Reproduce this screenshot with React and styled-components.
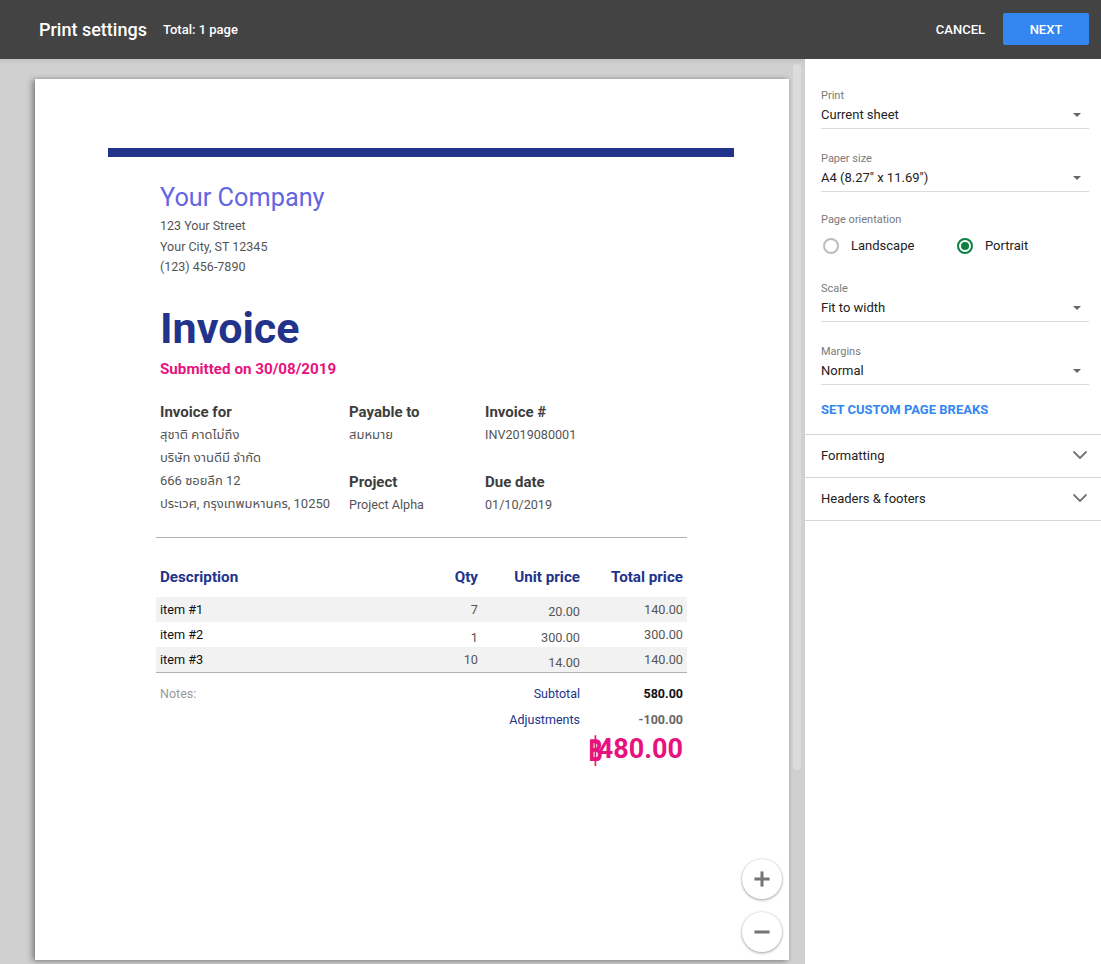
import React from 'react';
import styled, { createGlobalStyle } from 'styled-components';
import { Plus, Minus, ChevronDown } from 'lucide-react';

const Global = createGlobalStyle`
  html, body { margin: 0; padding: 0; height: 100%; overflow: hidden; }
  body { font-family: Roboto, "Noto Sans", "Noto Sans Thai", "Liberation Sans", sans-serif; }
  * { box-sizing: border-box; }
`;

const Shell = styled.div`
  width: 1101px; height: 964px; display: flex; flex-direction: column; overflow: hidden;
`;
const Header = styled.header`
  height: 59px; flex: none; background: #434343; color: #fff;
  display: flex; align-items: center; padding: 0 12px 0 39px;
`;
const Title = styled.h1`
  margin: 0; font-size: 18px; font-weight: 500; color: #fff;
`;
const Total = styled.span`
  margin-left: 16px; font-size: 13px; font-weight: 500;
`;
const Spacer = styled.div` flex: 1; `;
const CancelButton = styled.button`
  background: none; border: 0; color: #fff; font: 500 13px Roboto, sans-serif;
  padding: 0; margin-right: 18px;
`;
const NextButton = styled.button`
  width: 86px; height: 32px; border: 0; border-radius: 2px; background: #3486f0; color: #fff;
  font: 500 13px Roboto, sans-serif; margin-bottom: 1px;
`;
const Body = styled.div` flex: 1; display: flex; min-height: 0; `;
const Preview = styled.main`
  position: relative; width: 805px; flex: none; background: #d0d0d0;
  padding: 20px 0 0 35px; overflow: hidden;
  box-shadow: inset 0 6px 6px -6px rgba(0,0,0,.12);
`;
const Scrollbar = styled.div`
  position: absolute; left: 793px; top: 5px; width: 8px; height: 706px;
  background: #dcdcdc; border-radius: 4px;
`;
const Sheet = styled.article`
  width: 754px; height: 881px; background: #fff; padding: 69px 55px 0 73px;
  box-shadow: -3px 1px 6px rgba(0,0,0,.35), 0 0 3px rgba(0,0,0,.15);
`;
const TopBar = styled.div` height: 9px; background: #22338c; `;
const Content = styled.div` margin: 0 47px 0 48px; width: 531px; `;
const Inset = styled.div` padding-left: 4px; `;
const Company = styled.h2`
  margin: 26px 0 0; font-size: 25.3px; font-weight: 400; line-height: 30px; color: #6366e0;
`;
const Address = styled.div`
  margin-top: 3px; font-size: 12.5px; line-height: 20.5px; color: #555;
`;
const InvoiceTitle = styled.h2`
  margin: 25px 0 0; font-size: 43px; line-height: 50px; font-weight: 700; color: #22338c;
`;
const Submitted = styled.div`
  margin-top: 6px; font-size: 15.2px; line-height: 20px; font-weight: 700; color: #e8127f;
`;
const Details = styled.div`
  margin-top: 23px; display: grid; grid-template-columns: 189px 136px 1fr;
`;
const Column = styled.div` display: flex; flex-direction: column; `;
const DetailHead = styled.div`
  font-size: 15px; font-weight: 700; line-height: 20px; color: #3d3d3d;
  margin-top: ${p => p.$gap || 0}px; margin-bottom: 1px;
`;
const DetailLine = styled.div`
  font-size: ${p => (p.$thai ? 13 : 12.6)}px; line-height: 23.3px; height: 23.3px; color: #555; white-space: nowrap;
`;
const Rule = styled.div` height: 1px; margin-top: 21px; background: #b0b0b0; `;
const TableHead = styled.div`
  display: grid; grid-template-columns: 1fr 60px 102px 103px; margin-top: 29px; padding: 0 4px;
  font-size: 15.2px; font-weight: 700; line-height: 20px; color: #22338c; height: 30px;
`;
const Right = styled.div` text-align: right; `;
const Row = styled.div`
  display: grid; grid-template-columns: 1fr 60px 102px 103px; height: 25px; padding: 0 4px;
  font-size: 12.7px; line-height: 25px; color: #555;
  background: ${p => (p.$shaded ? '#f2f2f2' : '#fff')};
`;
const ItemName = styled.div` color: #111; `;
const Nudge = styled(Right)` padding-top: ${p => p.$top || 0}px; `;
const TableEnd = styled.div` height: 1px; background: #b0b0b0; `;
const Summary = styled.div`
  display: grid; grid-template-columns: 1fr 102px 103px; padding: 0 4px; height: 26px;
  font-size: 12.5px; line-height: 26px; margin-top: ${p => p.$top || 0}px;
`;
const Notes = styled.div` color: #9a9a9a; `;
const SumLabel = styled(Right)` color: #22338c; `;
const SumValue = styled(Right)` font-weight: 700; color: ${p => p.$color}; `;
const GrandTotal = styled.div`
  margin-top: -2px; padding-right: 4px; text-align: right; font-size: 27px; line-height: 34px; font-weight: 700; color: #e8127f;
`;
const Baht = styled.span`
  font-family: "Noto Sans", "DejaVu Sans", sans-serif; display: inline-block; transform: scaleY(1.25) scaleX(.75);
  transform-origin: right center; margin-right: -5px;
`;
const Fab = styled.button`
  position: absolute; left: 742px; top: ${p => p.$top}px; width: 40px; height: 40px; border-radius: 50%;
  border: 0; padding: 0; background: #fff; color: #757575; display: flex; align-items: center; justify-content: center;
  box-shadow: 0 1px 3px rgba(0,0,0,.35), 0 0 2px rgba(0,0,0,.12);
`;
const Panel = styled.aside`
  flex: 1; background: #fff; display: flex; flex-direction: column;
`;
const Settings = styled.div` padding: 30px 12px 0 16px; `;
const Field = styled.div` height: ${p => p.$h || 63}px; `;
const FieldLabel = styled.div` font-size: 11px; line-height: 14px; color: #7a7a7a; `;
const Select = styled.div`
  margin-top: 2px; height: 24px; display: flex; align-items: center; justify-content: space-between;
  font-size: 13px; color: #222; border-bottom: 1px solid #dcdcdc; padding: 0 8px 4px 0; line-height: 18px;
`;
const Caret = styled.span`
  width: 0; height: 0; border-left: 4.5px solid transparent; border-right: 4.5px solid transparent;
  border-top: 4px solid #666;
`;
const Orientation = styled.div` height: 69px; `;
const RadioRow = styled.div`
  display: flex; margin-top: 10px; font-size: 13px; color: #222; line-height: 18px;
`;
const RadioItem = styled.label`
  display: flex; align-items: center; width: 134px; padding-left: 2px;
`;
const Radio = styled.span`
  width: 16px; height: 16px; border-radius: 50%; flex: none; margin-right: 12px;
  border: 2px solid ${p => (p.$on ? '#0b8043' : '#bdbdbd')};
  display: flex; align-items: center; justify-content: center;
  &::after { content: ''; width: 8px; height: 8px; border-radius: 50%; background: ${p => (p.$on ? '#0b8043' : 'transparent')}; }
`;
const LinkText = styled.div`
  margin-top: -7px; font-size: 13px; font-weight: 700; line-height: 18px; color: #3486f0; height: 33px;
`;
const Accordion = styled.div`
  height: 43px; border-top: 1px solid #d6d6d6; padding: 0 9px 2px 16px;
  display: flex; align-items: center; justify-content: space-between;
  font-size: 13px; color: #222;
  ${p => p.$last && 'height: 44px; border-bottom: 1px solid #d6d6d6;'}
`;

const rows = [
  ['item #1', '7', 0, '20.00', 2, '140.00', true],
  ['item #2', '1', 3, '300.00', 3, '300.00', false],
  ['item #3', '10', 0, '14.00', 3, '140.00', true],
];

function SelectField({ label, value, height }) {
  return (
    <Field $h={height}>
      <FieldLabel>{label}</FieldLabel>
      <Select>{value}<Caret /></Select>
    </Field>
  );
}

export default function App() {
  return (
    <Shell>
      <Global />
      <Header>
        <Title>Print settings</Title>
        <Total>Total: 1 page</Total>
        <Spacer />
        <CancelButton>CANCEL</CancelButton>
        <NextButton>NEXT</NextButton>
      </Header>
      <Body>
        <Preview>
          <Scrollbar />
          <Sheet>
            <TopBar />
            <Content>
              <Inset>
                <Company>Your Company</Company>
                <Address>123 Your Street<br />Your City, ST 12345<br />(123) 456-7890</Address>
                <InvoiceTitle>Invoice</InvoiceTitle>
                <Submitted>Submitted on 30/08/2019</Submitted>
                <Details>
                  <Column>
                    <DetailHead>Invoice for</DetailHead>
                    <DetailLine $thai>สุชาติ คาดไม่ถึง</DetailLine>
                    <DetailLine $thai>บริษัท งานดีมี จำกัด</DetailLine>
                    <DetailLine $thai>666 ซอยลึก 12</DetailLine>
                    <DetailLine $thai>ประเวศ, กรุงเทพมหานคร, 10250</DetailLine>
                  </Column>
                  <Column>
                    <DetailHead>Payable to</DetailHead>
                    <DetailLine $thai>สมหมาย</DetailLine>
                    <DetailHead $gap={26}>Project</DetailHead>
                    <DetailLine>Project Alpha</DetailLine>
                  </Column>
                  <Column>
                    <DetailHead>Invoice #</DetailHead>
                    <DetailLine>INV2019080001</DetailLine>
                    <DetailHead $gap={26}>Due date</DetailHead>
                    <DetailLine>01/10/2019</DetailLine>
                  </Column>
                </Details>
              </Inset>
              <Rule />
              <TableHead>
                <div>Description</div>
                <Right>Qty</Right>
                <Right>Unit price</Right>
                <Right>Total price</Right>
              </TableHead>
              {rows.map(r => (
                <Row key={r[0]} $shaded={r[6]}>
                  <ItemName>{r[0]}</ItemName>
                  <Nudge $top={r[2]}>{r[1]}</Nudge>
                  <Nudge $top={r[4]}>{r[3]}</Nudge>
                  <Right>{r[5]}</Right>
                </Row>
              ))}
              <TableEnd />
              <Summary $top={8}>
                <Notes>Notes:</Notes>
                <SumLabel>Subtotal</SumLabel>
                <SumValue $color="#111">580.00</SumValue>
              </Summary>
              <Summary>
                <div />
                <SumLabel>Adjustments</SumLabel>
                <SumValue $color="#666">-100.00</SumValue>
              </Summary>
              <GrandTotal><Baht>฿</Baht>480.00</GrandTotal>
            </Content>
          </Sheet>
          <Fab $top={800}><Plus size={26} strokeWidth={2.8} strokeLinecap="butt" /></Fab>
          <Fab $top={853}><Minus size={26} strokeWidth={2.8} strokeLinecap="butt" /></Fab>
        </Preview>
        <Panel>
          <Settings>
            <SelectField label="Print" value="Current sheet" />
            <SelectField label="Paper size" value={'A4 (8.27" x 11.69")'} height={61} />
            <Orientation>
              <FieldLabel>Page orientation</FieldLabel>
              <RadioRow>
                <RadioItem><Radio />Landscape</RadioItem>
                <RadioItem><Radio $on />Portrait</RadioItem>
              </RadioRow>
            </Orientation>
            <SelectField label="Scale" value="Fit to width" />
            <SelectField label="Margins" value="Normal" />
            <LinkText>SET CUSTOM PAGE BREAKS</LinkText>
          </Settings>
          <Accordion>Formatting<ChevronDown size={24} color="#757575" strokeWidth={1.8} /></Accordion>
          <Accordion $last>Headers &amp; footers<ChevronDown size={24} color="#757575" strokeWidth={1.8} /></Accordion>
        </Panel>
      </Body>
    </Shell>
  );
}
